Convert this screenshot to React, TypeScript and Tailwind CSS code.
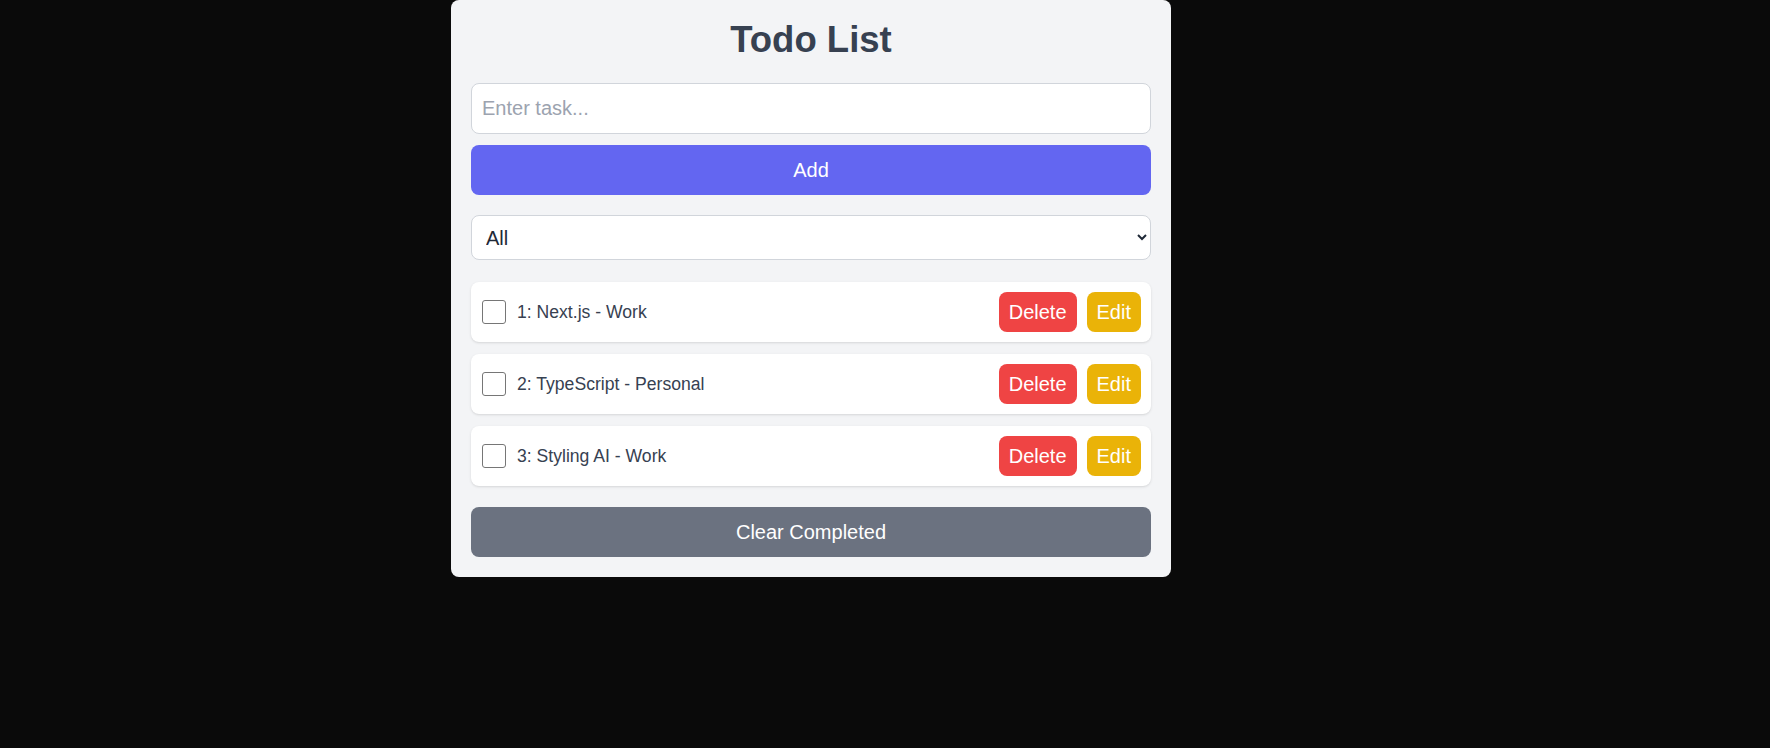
import React from "react";

const todos = [
  { id: 1, text: "Next.js", cat: "Work" },
  { id: 2, text: "TypeScript", cat: "Personal" },
  { id: 3, text: "Styling AI", cat: "Work" },
];

export default function App() {
  return (
    <div className="min-h-[748px] w-full bg-[#0a0a0a] font-['Liberation_Sans',Arial,sans-serif]">
      <div className="ml-[451px] w-[720px] rounded-lg bg-[#f3f4f6] px-5 pt-5 pb-5">
        <h1 className="mb-[23px] text-center text-[36.5px] leading-10 font-bold text-[#374151]">Todo List</h1>
        <input
          type="text"
          placeholder="Enter task..."
          className="block h-[51px] w-full rounded-lg border border-[#d1d5db] bg-white px-2.5 text-xl text-[#1f2937] placeholder:text-[#9ca3af] outline-none"
        />
        <button className="mt-[11px] block h-[50px] w-full rounded-lg bg-[#6366f1] text-xl text-white">
          Add
        </button>
        <select className="mt-5 block h-[45px] w-full rounded-lg border border-[#d1d5db] bg-white px-2.5 text-xl text-[#1f2937] outline-none">
          <option>All</option>
          <option>Work</option>
          <option>Personal</option>
        </select>
        <ul className="mt-[22px] flex flex-col gap-3">
          {todos.map((t) => (
            <li
              key={t.id}
              className="flex h-[60px] items-center justify-between rounded-lg bg-white p-2.5 shadow-[0_1px_3px_0_rgba(0,0,0,0.1),0_1px_2px_-1px_rgba(0,0,0,0.1)]"
            >
              <div className="flex items-center">
                <input
                  type="checkbox"
                  className="ml-px mr-[11px] h-6 w-6 appearance-none rounded-[3px] border border-[#767676] bg-white"
                />
                <span className="text-[17.6px] text-[#374151]">
                  {t.id}: {t.text} - {t.cat}
                </span>
              </div>
              <div className="flex items-center gap-2.5">
                <button className="h-10 rounded-lg bg-[#ef4444] px-2.5 text-xl text-white">Delete</button>
                <button className="h-10 rounded-lg bg-[#eab308] px-2.5 text-xl text-white">Edit</button>
              </div>
            </li>
          ))}
        </ul>
        <button className="mt-[21px] block h-[50px] w-full rounded-lg bg-[#6b7280] text-xl text-white">
          Clear Completed
        </button>
      </div>
    </div>
  );
}
